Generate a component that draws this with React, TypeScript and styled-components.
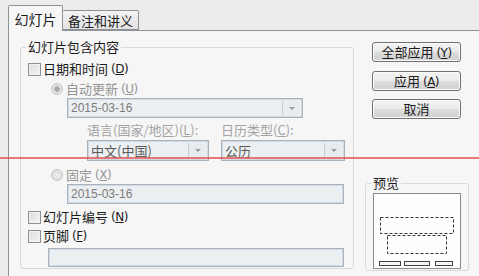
import React, { FC } from 'react'
import styled, { createGlobalStyle } from 'styled-components'

const GlobalStyle = createGlobalStyle`
  html, body {
    margin: 0;
    padding: 0;
    background: #ececec;
  }
  body {
    font-family: "Noto Sans CJK SC", "Noto Sans", sans-serif;
    font-size: 13px;
    color: #1b1b1b;
    overflow: hidden;
  }
`

const Page = styled.div`
  position: relative;
  width: 479px;
  height: 276px;
  overflow: hidden;
  box-sizing: border-box;
  padding: 5px 0 0 8px;
  background: #ececec;
`

const TabStrip = styled.div`
  position: relative;
  z-index: 1;
  display: flex;
  align-items: flex-end;
  height: 25px;
`

const Tab = styled.div<{ $active?: boolean }>`
  box-sizing: border-box;
  display: flex;
  align-items: center;
  justify-content: center;
  width: ${p => (p.$active ? 55 : 76)}px;
  height: ${p => (p.$active ? 26 : 20)}px;
  margin-bottom: ${p => (p.$active ? -1 : 0)}px;
  border: 1px solid #8e9296;
  border-bottom: ${p => (p.$active ? 'none' : '1px solid #8e9296')};
  border-left: ${p => (p.$active ? '1px solid #8e9296' : 'none')};
  border-radius: 2px 2px 0 0;
  background: ${p => (p.$active ? '#f6f6f6' : 'linear-gradient(#f3f3f3, #e3e3e3)')};
  font-size: ${p => (p.$active ? 14 : 13)}px;
  line-height: 16px;
  padding-top: ${p => (p.$active ? 0 : 1)}px;
`

const Panel = styled.div`
  box-sizing: border-box;
  display: flex;
  align-items: flex-start;
  width: 480px;
  height: 260px;
  padding: 8px 0 0 11px;
  border: 1px solid #8e9296;
  background: #f6f6f6;
`

const Group = styled.fieldset<{ $width: number }>`
  box-sizing: border-box;
  width: ${p => p.$width}px;
  margin: 0;
  padding: 0 0 1px 7px;
  border: 1px solid #d3dade;
  border-radius: 3px;
  display: flex;
  flex-direction: column;
`

const Legend = styled.legend`
  padding: 0 2px;
  margin-left: -2px;
  font-size: 13px;
  line-height: 16px;
  color: #1b1b1b;
`

const Row = styled.div<{ $top: number; $indent?: number; $muted?: boolean }>`
  display: flex;
  align-items: center;
  height: 16px;
  margin-top: ${p => p.$top}px;
  padding-left: ${p => p.$indent ?? 0}px;
  font-size: 13px;
  line-height: 16px;
  color: ${p => (p.$muted ? '#959595' : '#1b1b1b')};
  white-space: nowrap;
`

const Check = styled.span`
  box-sizing: border-box;
  width: 13px;
  height: 13px;
  margin-right: 2px;
  border: 1px solid #8f8f8f;
  background: linear-gradient(135deg, #dcdcdc, #f4f4f4);
  box-shadow: inset 0 0 0 1px #f2f2f2;
`

const Radio = styled.span<{ $on?: boolean }>`
  box-sizing: border-box;
  width: 12px;
  height: 12px;
  margin-right: 3px;
  border-radius: 50%;
  border: 1px solid #c6c6c6;
  background: ${p =>
    p.$on
      ? 'radial-gradient(circle, #a9a9a9 0 2.5px, #e2e2e2 3px)'
      : 'radial-gradient(circle, #ececec, #dadada)'};
`

const Key = styled.span`
  margin-left: 3px;
  font-size: 12px;
  font-family: "DejaVu Sans", sans-serif;
  letter-spacing: -0.5px;
`

const Field = styled.div<{ $width: number; $top?: number; $indent?: number; $height?: number }>`
  box-sizing: border-box;
  display: flex;
  align-items: stretch;
  width: ${p => p.$width}px;
  height: ${p => p.$height ?? 20}px;
  margin-top: ${p => p.$top ?? 0}px;
  margin-left: ${p => p.$indent ?? 0}px;
  border: 1px solid #a7b2bf;
  box-shadow: inset 0 0 0 1px #d3d9e0;
  background: #eceff2;
`

const FieldText = styled.span<{ $dark?: boolean }>`
  flex: 1;
  display: flex;
  align-items: center;
  padding-left: 3px;
  font-family: ${p => (p.$dark ? '"Noto Sans CJK SC", sans-serif' : '"Liberation Sans", sans-serif')};
  font-size: ${p => (p.$dark ? 13 : 12)}px;
  color: ${p => (p.$dark ? '#5a5a5a' : '#7c7c7c')};
`

const DropButton = styled.span`
  width: 17px;
  display: flex;
  align-items: center;
  justify-content: center;
  margin: 2px 2px 2px 0;
  border-left: 1px solid #c4ccd4;
  background: #e9ecef;

  &::after {
    content: '';
    border-left: 3px solid transparent;
    border-right: 3px solid transparent;
    border-top: 3px solid #9a9a9a;
  }
`

const LangGrid = styled.div`
  display: grid;
  grid-template-columns: 122px 124px;
  column-gap: 12px;
  row-gap: 2px;
  margin: 4px 0 0 59px;
`

const GridLabel = styled.span`
  height: 16px;
  font-size: 13px;
  line-height: 16px;
  color: #a3a3a3;
  white-space: nowrap;
`

const Side = styled.div`
  display: flex;
  flex-direction: column;
  margin-left: 11px;
  width: 104px;
`

const Button = styled.button<{ $top: number }>`
  box-sizing: border-box;
  width: 89px;
  height: 20px;
  margin: ${p => p.$top}px 0 0 7px;
  padding: 0;
  border: 1px solid #707070;
  border-radius: 3px;
  background: linear-gradient(#f3f3f3, #ebebeb 48%, #dddddd 52%, #d0d0d0);
  box-shadow: inset 0 0 0 1px #fbfbfb;
  font-family: "Noto Sans CJK SC", sans-serif;
  font-size: 13px;
  line-height: 16px;
  color: #1b1b1b;
`

const PreviewGroup = styled(Group)`
  margin-top: 56px;
  padding: 0 0 1px 7px;
`

const PreviewBox = styled.svg`
  display: block;
  margin-top: 2px;
`

const RedLine = styled.div`
  position: absolute;
  left: 0;
  right: 0;
  top: 157px;
  height: 2px;
  background: rgba(226, 72, 72, 0.72);
`

const Preview: FC = () => (
  <PreviewBox width="88" height="76" viewBox="0 0 88 76">
    <rect x="0.5" y="0.5" width="87" height="75" fill="#fdfdfd" stroke="#8a8a8a" />
    <rect x="7.5" y="24.5" width="73" height="16" fill="none" stroke="#333" strokeDasharray="3 2" />
    <rect x="14.5" y="42.5" width="59" height="18" fill="none" stroke="#333" strokeDasharray="3 2" />
    <rect x="6.5" y="68.5" width="21" height="4" fill="#f4f4f4" stroke="#444" />
    <rect x="31.5" y="68.5" width="25" height="4" fill="#f4f4f4" stroke="#444" />
    <rect x="62.5" y="68.5" width="17" height="4" fill="#f4f4f4" stroke="#444" />
  </PreviewBox>
)

const App: FC = () => (
  <Page>
    <GlobalStyle />
    <TabStrip>
      <Tab $active>幻灯片</Tab>
      <Tab>备注和讲义</Tab>
    </TabStrip>
    <Panel>
      <Group $width={334}>
        <Legend>幻灯片包含内容</Legend>
        <Row $top={6}>
          <Check />
          日期和时间<Key>(<u>D</u>)</Key>
        </Row>
        <Row $top={4} $indent={23} $muted>
          <Radio $on />
          自动更新<Key>(<u>U</u>)</Key>
        </Row>
        <Field $width={236} $top={1} $indent={39}>
          <FieldText>2015-03-16</FieldText>
          <DropButton />
        </Field>
        <LangGrid>
          <GridLabel>语言(国家/地区)(<u>L</u>):</GridLabel>
          <GridLabel>日历类型(<u>C</u>):</GridLabel>
          <Field $width={122} $height={21}>
            <FieldText $dark>中文(中国)</FieldText>
            <DropButton />
          </Field>
          <Field $width={124} $height={21}>
            <FieldText $dark>公历</FieldText>
            <DropButton />
          </Field>
        </LangGrid>
        <Row $top={6} $indent={23} $muted>
          <Radio />
          固定<Key>(<u>X</u>)</Key>
        </Row>
        <Field $width={277} $top={1} $indent={39}>
          <FieldText>2015-03-16</FieldText>
        </Field>
        <Row $top={5}>
          <Check />
          幻灯片编号<Key>(<u>N</u>)</Key>
        </Row>
        <Row $top={3}>
          <Check />
          页脚<Key>(<u>F</u>)</Key>
        </Row>
        <Field $width={296} $top={4} $indent={20} $height={19} />
      </Group>
      <Side>
        <Button $top={3}>
          全部应用<Key>(<u>Y</u>)</Key>
        </Button>
        <Button $top={9}>
          应用<Key>(<u>A</u>)</Key>
        </Button>
        <Button $top={8}>取消</Button>
        <PreviewGroup $width={104}>
          <Legend>预览</Legend>
          <Preview />
        </PreviewGroup>
      </Side>
    </Panel>
    <RedLine />
  </Page>
)

export default App
